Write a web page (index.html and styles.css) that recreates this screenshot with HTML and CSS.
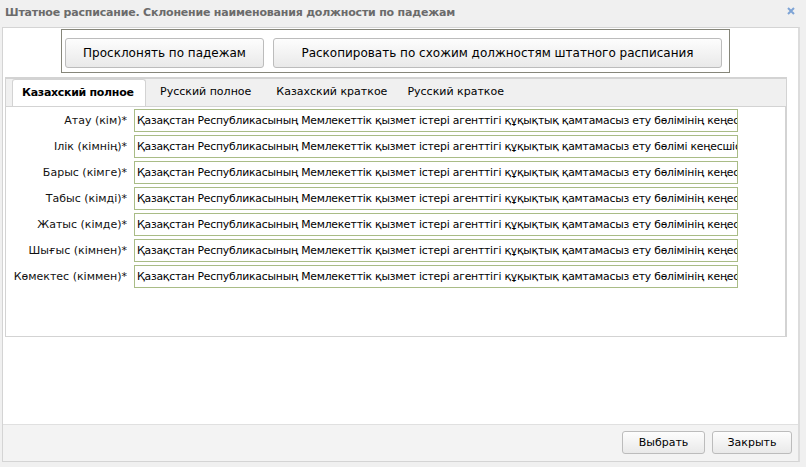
FILE: index.html
```html
<!DOCTYPE html>
<html lang="ru">
<head>
<meta charset="utf-8">
<title>Штатное расписание</title>
<link rel="stylesheet" href="styles.css">
</head>
<body>
<div class="window">
  <div class="titlebar">
    <span class="title">Штатное расписание. Склонение наименования должности по падежам</span>
    <svg class="close" width="8" height="8" viewBox="0 0 8 8"><path d="M1 1L7 7M7 1L1 7" stroke="#7ea4d6" stroke-width="2"/></svg>
  </div>
  <div class="panel">
    <div class="content">
      <div class="toolbar">
        <button class="btn big b1">Просклонять по падежам</button>
        <button class="btn big b2">Раскопировать по схожим должностям штатного расписания</button>
      </div>
      <div class="tabpanel">
        <div class="tabstrip">
          <div class="tab active">Казахский полное</div>
          <div class="tab t2">Русский полное</div>
          <div class="tab t3">Казахский краткое</div>
          <div class="tab t4">Русский краткое</div>
        </div>
        <div class="tabbody">
          <div class="form">
            <label>Атау (кім)*</label><div class="field">Қазақстан Республикасының Мемлекеттік қызмет істері агенттігі құқықтық қамтамасыз ету бөлімінің кеңесшісі</div>
            <label>Ілік (кімнің)*</label><div class="field">Қазақстан Республикасының Мемлекеттік қызмет істері агенттігі құқықтық қамтамасыз ету бөлімі кеңесшісінің</div>
            <label>Барыс (кімге)*</label><div class="field">Қазақстан Республикасының Мемлекеттік қызмет істері агенттігі құқықтық қамтамасыз ету бөлімінің кеңесшісіне</div>
            <label>Табыс (кімді)*</label><div class="field">Қазақстан Республикасының Мемлекеттік қызмет істері агенттігі құқықтық қамтамасыз ету бөлімінің кеңесшісін</div>
            <label>Жатыс (кімде)*</label><div class="field">Қазақстан Республикасының Мемлекеттік қызмет істері агенттігі құқықтық қамтамасыз ету бөлімінің кеңесшісінде</div>
            <label>Шығыс (кімнен)*</label><div class="field">Қазақстан Республикасының Мемлекеттік қызмет істері агенттігі құқықтық қамтамасыз ету бөлімінің кеңесшісінен</div>
            <label>Көмектес (кіммен)*</label><div class="field">Қазақстан Республикасының Мемлекеттік қызмет істері агенттігі құқықтық қамтамасыз ету бөлімінің кеңесшісімен</div>
          </div>
        </div>
      </div>
    </div>
    <div class="footer">
      <button class="btn small sel">Выбрать</button>
      <button class="btn small cls">Закрыть</button>
    </div>
  </div>
</div>
</body>
</html>
```

FILE: styles.css
```css
html, body {
  margin: 0;
  padding: 0;
  background: #f0f0f0;
}
body {
  width: 806px;
  height: 467px;
  overflow: hidden;
  font-family: "DejaVu Sans", Tahoma, sans-serif;
  font-size: 11px;
  color: #000;
}
.window {
  display: flex;
  flex-direction: column;
  height: 467px;
}
.titlebar {
  height: 27px;
  display: flex;
  align-items: center;
  justify-content: space-between;
  padding: 0 11px 2px 5px;
  box-sizing: border-box;
}
.title {
  font-weight: bold;
  color: #6b6b6b;
  font-size: 11px;
  letter-spacing: -0.2px;
}
.close {
  display: block;
  margin-top: -4px;
}
.panel {
  margin: 0 6px 0 2px;
  border: 1px solid #d4d4d4;
  border-right: 2px solid #dcdcdc;
  background: #fff;
  height: 433px;
  display: flex;
  flex-direction: column;
}
.content {
  flex: 1;
  display: flex;
  flex-direction: column;
}
.toolbar {
  align-self: flex-start;
  margin: 1px 0 0 58px;
  width: 669px;
  height: 44px;
  box-sizing: border-box;
  border: 1px solid #86867a;
  display: flex;
  align-items: flex-start;
  padding: 8px 0 0 3px;
  gap: 9px;
}
.btn {
  font-family: inherit;
  color: #000;
  border: 1px solid #bcbcbc;
  border-radius: 3px;
  background: linear-gradient(#fdfdfd, #e9e9e9);
  padding: 0;
  margin: 0;
  box-sizing: border-box;
  white-space: nowrap;
}
.big {
  height: 30px;
  font-size: 12px;
}
.b1 { width: 199px; }
.b2 { width: 449px; }
.tabpanel {
  margin: 4px 0 0 2px;
  width: 782px;
}
.tabstrip {
  height: 29px;
  box-sizing: border-box;
  background: #f0f0f0;
  border: 1px solid #d3d3d3;
  border-top-width: 2px;
  border-bottom: 0;
  display: flex;
  align-items: flex-end;
  padding-left: 6px;
}
.tab {
  height: 26px;
  box-sizing: border-box;
  line-height: 24px;
  padding: 0 10px;
  white-space: nowrap;
}
.tab.active {
  width: 134px;
  padding: 0 0 0 9px;
  background: #fff;
  border: 1px solid #d3d3d3;
  border-bottom: 0;
  border-radius: 3px 3px 0 0;
  font-weight: bold;
  letter-spacing: -0.3px;
  height: 27px;
  line-height: 25px;
}
.t2 { margin-left: 4px; }
.t3 { margin-left: 5px; }
.t4 { margin-left: 0; }
.tabbody {
  height: 231px;
  box-sizing: border-box;
  border: 1px solid #d3d3d3;
  border-right-width: 2px;
  padding-top: 2px;
}
.form {
  display: grid;
  grid-template-columns: 121px 604px;
  column-gap: 7px;
  row-gap: 3px;
  grid-auto-rows: 23px;
}
.form label {
  text-align: right;
  line-height: 23px;
  white-space: nowrap;
  color: #111;
}
.field {
  border: 1px solid #a9bc86;
  box-sizing: border-box;
  line-height: 21px;
  padding-left: 2px;
  white-space: nowrap;
  overflow: hidden;
  font-size: 10.8px;
  letter-spacing: -0.2px;
}
.footer {
  height: 37px;
  box-sizing: border-box;
  background: #f3f3f3;
  border-top: 1px solid #e0e0e0;
  display: flex;
  justify-content: flex-end;
  align-items: flex-start;
  padding: 6px 6px 0 0;
  gap: 7px;
}
.small {
  height: 23px;
  font-size: 11px;
}
.sel { width: 83px; }
.cls { width: 80px; }
```
